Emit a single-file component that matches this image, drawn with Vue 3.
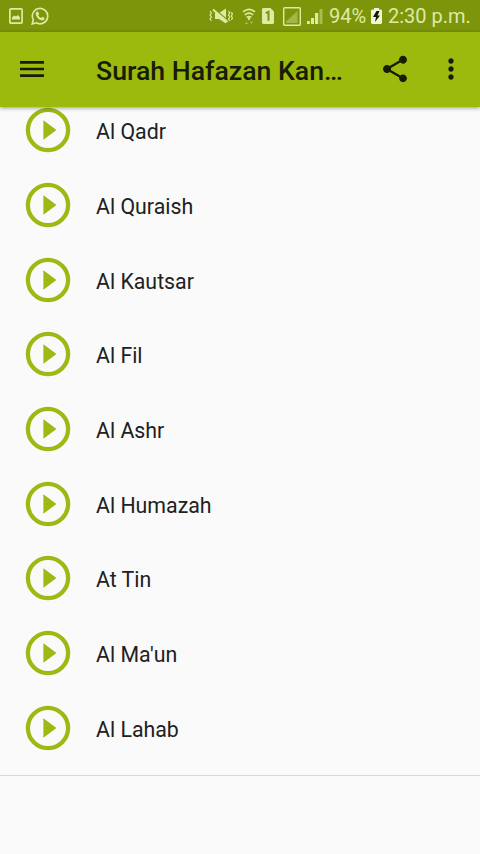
<script setup>
import { ref } from "vue";

const title = ref("Surah Hafazan Kan…");

const surahs = ref([
  "Al Qadr",
  "Al Quraish",
  "Al Kautsar",
  "Al Fil",
  "Al Ashr",
  "Al Humazah",
  "At Tin",
  "Al Ma'un",
  "Al Lahab",
]);
</script>

<template>
  <div class="screen">
    <header class="status-bar">
      <svg class="picture" width="14" height="16" viewBox="0 0 14 16">
        <rect x="0.9" y="0.9" width="12.2" height="14.2" rx="1" fill="none" stroke="currentColor" stroke-width="1.7" />
        <path d="M3 11.5V9.5L5 7.5L7 8.5L9 7L11 9.5V11.5Z" fill="currentColor" />
      </svg>
      <svg class="whatsapp" width="18" height="18" viewBox="0 0 18 18">
        <path d="M1.2 17L2.3 12.8A7.7 7.7 0 1 1 5.3 15.8Z" fill="none" stroke="currentColor" stroke-width="1.6" />
        <path d="M5.6 4.7L7 4.5L8.1 7L7.2 8.2Q8.2 10.2 10.3 11L11.4 9.8L13.7 11Q13.5 13.3 11.3 13.4Q5.6 12.5 4.7 7Q4.6 5.4 5.6 4.7Z" fill="currentColor" />
      </svg>
      <div class="spacer"></div>
      <svg class="mute" width="25" height="18" viewBox="0 0 25 18">
        <path d="M7 6H11L18 1.5V16.5L11 12H7Z" fill="currentColor" />
        <path d="M6.5 2L20 13.5" stroke="#7c950b" stroke-width="1.4" />
        <path d="M5 2.5L19.5 15" stroke="currentColor" stroke-width="2" />
        <path d="M2 4L3.5 6L2 8L3.5 10L2 12L3.5 14M20.5 4L21.8 6L20.5 8L21.8 10L20.5 12L21.8 14M23.3 5L24.4 7L23.3 9L24.4 11L23.3 13" fill="none" stroke="currentColor" stroke-width="1.2" />
      </svg>
      <svg class="wifi" width="14" height="18" viewBox="0 0 14 18">
        <path d="M1 4.8Q7 -0.2 13 4.8M2.8 7.8Q7 4.4 11.2 7.8M4.7 10.4Q7 8.7 9.3 10.4" fill="none" stroke="currentColor" stroke-width="1.7" />
        <circle cx="7" cy="11.7" r="1.2" fill="currentColor" />
        <path d="M3 17L4.5 14.5L6 17ZM8 14.5L9.5 17L11 14.5Z" fill="currentColor" opacity="0.5" />
      </svg>
      <svg class="sim" width="12" height="16" viewBox="0 0 12 16">
        <path d="M1 0H8.5L12 3.5V15L11 16H1L0 15V1Z" fill="currentColor" />
        <path d="M3.8 5.2L6.5 3.8V12.8" fill="none" stroke="#7c950b" stroke-width="2" />
      </svg>
      <svg class="signal-box" width="18" height="19" viewBox="0 0 18 19">
        <rect x="0.7" y="0.7" width="16.6" height="17.6" rx="1" fill="none" stroke="currentColor" stroke-width="1.4" />
        <path d="M3 16V14.5L14.5 4V16Z" fill="currentColor" opacity="0.4" />
      </svg>
      <svg class="signal" width="16" height="16" viewBox="0 0 16 16">
        <path d="M0 13H2.8V16H0ZM4 10H7V16H4ZM8 5H11.2V16H8Z" fill="currentColor" />
        <path d="M12.5 1H15.5V16H12.5Z" fill="currentColor" opacity="0.45" />
      </svg>
      <span class="percent">94%</span>
      <svg class="battery" width="11" height="16" viewBox="0 0 11 16">
        <path d="M3 0H8V1.5H10L11 2.5V15L10 16H1L0 15V2.5L1 1.5H3Z" fill="#f0f4d9" />
        <path d="M5.5 3L2 9H5L4 14L9 7.5H6.5L8.5 3Z" fill="#151b00" />
      </svg>
      <time class="clock">2:30 p.m.</time>
    </header>

    <nav class="toolbar">
      <button class="icon-button" aria-label="Menu">
        <svg width="32" height="32" viewBox="0 0 24 24">
          <path d="M3 18h18v-2H3v2zm0-5h18v-2H3v2zm0-7v2h18V6H3z" fill="currentColor" />
        </svg>
      </button>
      <h1 class="title">{{ title }}</h1>
      <button class="icon-button share" aria-label="Share">
        <svg width="32" height="32" viewBox="0 0 24 24">
          <path d="M18 16.08c-.76 0-1.44.3-1.96.77L8.91 12.7c.05-.23.09-.46.09-.7s-.04-.47-.09-.7l7.05-4.11c.54.5 1.25.81 2.04.81 1.66 0 3-1.34 3-3s-1.34-3-3-3-3 1.34-3 3c0 .24.04.47.09.7L8.04 9.81C7.5 9.31 6.79 9 6 9c-1.66 0-3 1.34-3 3s1.34 3 3 3c.79 0 1.5-.31 2.04-.81l7.12 4.16c-.05.21-.08.43-.08.65 0 1.61 1.31 2.92 2.92 2.92s2.92-1.31 2.92-2.92-1.31-2.92-2.92-2.92z" fill="currentColor" />
        </svg>
      </button>
      <button class="icon-button more" aria-label="More options">
        <svg width="32" height="32" viewBox="0 0 24 24">
          <path d="M12 8c1.1 0 2-.9 2-2s-.9-2-2-2-2 .9-2 2 .9 2 2 2zm0 2c-1.1 0-2 .9-2 2s.9 2 2 2 2-.9 2-2-.9-2-2-2zm0 6c-1.1 0-2 .9-2 2s.9 2 2 2 2-.9 2-2-.9-2-2-2z" fill="currentColor" />
        </svg>
      </button>
    </nav>

    <main class="content">
      <ul class="list">
        <li v-for="surah in surahs" :key="surah" class="item">
          <svg class="play" width="46" height="46" viewBox="0 0 46 46">
            <circle cx="23" cy="23" r="20.1" fill="none" stroke="currentColor" stroke-width="4.3" />
            <path d="M18.4 13.3L31.5 23L18.4 32.7Z" fill="currentColor" />
          </svg>
          <span class="name">{{ surah }}</span>
        </li>
      </ul>
    </main>
    <footer class="banner"></footer>
  </div>
</template>

<style>
body {
  background-color: #fafafa;
  margin: 0;
}
</style>

<style scoped>
.screen {
  background-color: #fafafa;
  color: #212121;
  display: flex;
  flex-direction: column;
  font-family: Roboto, "Liberation Sans", sans-serif;
  height: 854px;
  overflow: hidden;
  width: 480px;
}

.status-bar {
  align-items: center;
  background-color: #7c950b;
  box-sizing: border-box;
  color: #dfeaa5;
  display: flex;
  flex: none;
  height: 32px;
  padding: 0 10px 0 9px;
}

.status-bar svg {
  flex: none;
}

.whatsapp {
  margin-left: 8px;
}

.spacer {
  flex: 1;
}

.wifi {
  margin-left: 9px;
}

.sim {
  margin-left: 6px;
}

.signal-box {
  margin-left: 9px;
}

.signal {
  margin-left: 6px;
}

.percent {
  font-size: 20px;
  line-height: 32px;
  margin-left: 6px;
  white-space: nowrap;
  width: 37px;
}

.battery {
  margin-left: 5px;
}

.clock {
  font-size: 20px;
  line-height: 32px;
  margin-left: 6px;
  white-space: nowrap;
  width: 82px;
}

.toolbar {
  align-items: center;
  background-color: #9cb90d;
  box-shadow: 0 1px 4px rgba(0, 0, 0, 0.4);
  box-sizing: border-box;
  color: #171c02;
  display: flex;
  flex: none;
  height: 75px;
  padding: 0 13px 1px 16px;
  z-index: 1;
}

.icon-button {
  background: none;
  border: none;
  color: inherit;
  cursor: pointer;
  flex: none;
  height: 32px;
  padding: 0;
  width: 32px;
}

.icon-button svg {
  display: block;
}

.title {
  flex: none;
  font-size: 26.67px;
  font-weight: 500;
  line-height: 36px;
  margin: 4px 0 0 48px;
  white-space: nowrap;
  width: 252px;
}

.share {
  margin-left: auto;
}

.more {
  margin-left: 24px;
}

.content {
  border-bottom: 1px solid #d8d8d8;
  flex: none;
  height: 668px;
}

.list {
  list-style: none;
  margin: -14px 0 0;
  padding: 0;
}

.item {
  align-items: center;
  display: flex;
  height: 74.7px;
  padding-left: 25px;
}

.play {
  color: #9cb914;
  flex: none;
}

.name {
  font-size: 21.33px;
  line-height: 28px;
  margin: 4px 0 0 25px;
}

.banner {
  flex: 1;
}
</style>
